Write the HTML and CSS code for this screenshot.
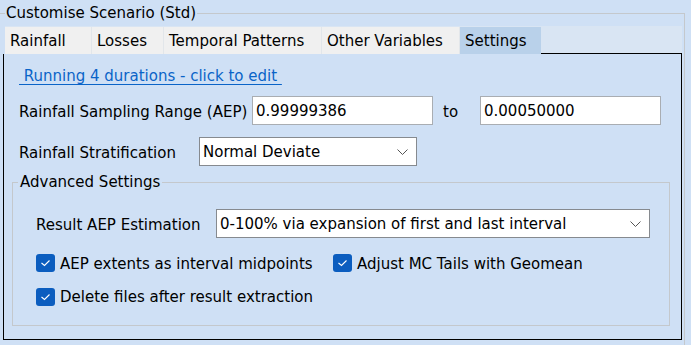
FILE: index.html
```html
<!DOCTYPE html>
<html lang="en">
<head>
<meta charset="utf-8"/>
<title>Customise Scenario (Std)</title>
<link rel="stylesheet" href="styles.css">
</head>
<body>
<fieldset class="scenario">
  <legend>Customise Scenario (Std)</legend>
  <div class="tabview">
    <div class="tabstrip">
      <div class="tab t-rain">Rainfall</div>
      <div class="tab t-loss">Losses</div>
      <div class="tab t-temp">Temporal Patterns</div>
      <div class="tab t-other">Other Variables</div>
      <div class="tab t-set selected">Settings</div>
      <div class="tabfill"></div>
    </div>
    <div class="panel">
      <a class="durations" href="#">&nbsp;Running 4 durations - click to edit&nbsp;</a>

      <div class="row row-range">
        <span class="label l-range">Rainfall Sampling Range (AEP)</span>
        <input class="field" type="text" value="0.99999386">
        <span class="label l-to">to</span>
        <input class="field" type="text" value="0.00050000">
      </div>

      <div class="row row-strat">
        <span class="label l-strat">Rainfall Stratification</span>
        <div class="combo c-strat">
          <span>Normal Deviate</span>
          <svg class="chev" width="11" height="6" viewBox="0 0 11 6"><polyline points="0.5,0.5 5.5,5.5 10.5,0.5" fill="none" stroke="#555" stroke-width="1"/></svg>
        </div>
      </div>

      <fieldset class="advanced">
        <legend>Advanced Settings</legend>
        <div class="row row-result">
          <span class="label l-result">Result AEP Estimation</span>
          <div class="combo c-result">
            <span>0-100% via expansion of first and last interval</span>
            <svg class="chev" width="11" height="6" viewBox="0 0 11 6"><polyline points="0.5,0.5 5.5,5.5 10.5,0.5" fill="none" stroke="#555" stroke-width="1"/></svg>
          </div>
        </div>
        <div class="checks">
          <label class="check c-first">
            <span class="box"><svg width="19" height="18" viewBox="0 0 19 18"><polyline points="5.5,9 8.5,11.5 13.5,6.5" fill="none" stroke="#fff" stroke-width="1.1"/></svg></span>
            <span class="text">AEP extents as interval midpoints</span>
          </label>
          <label class="check">
            <span class="box"><svg width="19" height="18" viewBox="0 0 19 18"><polyline points="5.5,9 8.5,11.5 13.5,6.5" fill="none" stroke="#fff" stroke-width="1.1"/></svg></span>
            <span class="text">Adjust MC Tails with Geomean</span>
          </label>
        </div>
        <div class="checks checks-last">
          <label class="check">
            <span class="box"><svg width="19" height="18" viewBox="0 0 19 18"><polyline points="5.5,9 8.5,11.5 13.5,6.5" fill="none" stroke="#fff" stroke-width="1.1"/></svg></span>
            <span class="text">Delete files after result extraction</span>
          </label>
        </div>
      </fieldset>
    </div>
  </div>
</fieldset>
</body>
</html>
```

FILE: styles.css
```css
html, body { margin: 0; padding: 0; }
body {
  background: #cfe0f5;
  font-family: "DejaVu Sans", "Liberation Sans", sans-serif;
  font-size: 15px;
  color: #000;
  width: 691px;
  height: 345px;
  overflow: hidden;
}

/* outer group box */
.scenario {
  margin: 4px 0 0 0;
  padding: 0;
  width: 685px;
  height: 341px;
  box-sizing: border-box;
  border: 1px solid #c4c8cc;
  border-left: none;
  border-bottom: none;
}
.scenario > legend {
  margin-left: 5px;
  padding: 0 1px;
  line-height: 18px;
}

.tabview { margin: 4px 0 0 3px; width: 679px; }

.tabstrip {
  display: flex;
  align-items: flex-end;
  height: 28px;
  margin-left: 2px;
  background: #d9e5f3;
}
.tab {
  height: 27px;
  line-height: 27px;
  padding: 1px 0 0 5px;
  box-sizing: border-box;
  background: #f0f0f0;
  border-right: 1px solid #e2e6ea;
  white-space: nowrap;
}
.tab.selected { background: #b9d1ea; border-right: none; }
.t-rain { width: 87px; }
.t-loss { width: 72px; }
.t-temp { width: 158px; }
.t-other { width: 138px; }
.t-set { width: 81px; }
.tabfill {
  flex: 1;
  height: 1px;
  background: #000;
}

.panel {
  height: 286px;
  box-sizing: border-box;
  border: 1px solid #000;
  border-top: none;
  padding: 0 0 0 15px;
  display: flex;
  flex-direction: column;
  align-items: flex-start;
}

.durations {
  margin-top: 12px;
  line-height: 20px;
  color: #0a64c8;
  text-decoration: underline;
  text-underline-offset: 3px;
}

.row { display: flex; align-items: center; }
.row-range { margin-top: 10px; height: 29px; }
.row-strat { margin-top: 12px; height: 29px; }
.label { padding-top: 2px; }
.l-range { width: 233px; }
.l-to { width: 47px; box-sizing: border-box; padding-left: 10px; }
.l-strat { width: 180px; }

.field {
  width: 181px;
  height: 29px;
  box-sizing: border-box;
  border: 1px solid #a9adb2;
  background: #fff;
  padding: 1px 3px 0;
  font: inherit;
  color: #000;
  outline: none;
}

.combo {
  height: 29px;
  box-sizing: border-box;
  border: 1px solid #868a8f;
  background: #fff;
  padding: 1px 8px 0 3px;
  display: flex;
  align-items: center;
  justify-content: space-between;
}
.c-strat { width: 218px; }
.c-result { width: 434px; }
.chev { display: block; }

/* advanced settings group */
.advanced {
  margin: 7px 0 0 -7px;
  padding: 0 0 19px 23px;
  width: 658px;
  box-sizing: border-box;
  border: 1px solid #c4c8cc;
}
.advanced > legend {
  margin-left: -18px;
  padding: 0 2px;
  line-height: 18px;
}
.row-result { margin-top: 18px; }
.l-result { width: 180px; }

.checks { display: flex; align-items: center; margin-top: 16px; height: 18px; }
.checks-last { margin-top: 15px; height: 19px; }
.check { display: flex; align-items: center; gap: 5px; white-space: nowrap; }
.check .text { padding-top: 1px; }
.c-first { width: 297px; }
.box {
  width: 19px;
  height: 18px;
  border-radius: 3px;
  background: #0b5dbf;
  display: block;
}
.box svg { display: block; }
```
